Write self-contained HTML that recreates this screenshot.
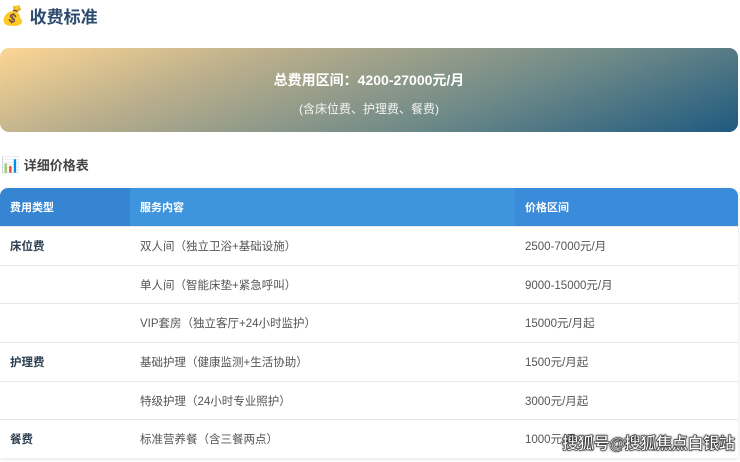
<!DOCTYPE html>
<html><head><meta charset="utf-8"><style>
body{margin:0;width:740px;height:462px;background:#fff;font-family:"Liberation Sans","Noto Sans CJK SC",sans-serif;overflow:hidden;position:relative}
.t1{position:absolute;left:1px;top:3px;font-size:17px;font-weight:bold;color:#2c4a6e;display:flex;align-items:center;gap:5px}
.banner{position:absolute;left:0;top:48px;width:738px;height:84px;border-radius:9px;background:linear-gradient(160deg,#fdd694 0%,#b9ae8c 30%,#6f8a88 65%,#1f5a80 100%);color:#fff;text-align:center}
.banner .a{margin-top:22px;font-size:14px;font-weight:bold}
.banner .b{margin-top:10px;font-size:12px;opacity:.9}
.t2{position:absolute;left:1px;top:155px;font-size:13px;font-weight:bold;color:#444;display:flex;align-items:center;gap:4px}
table{position:absolute;left:0;top:188px;width:738px;border-collapse:collapse;font-size:11.5px;color:#555;box-shadow:0 1px 4px rgba(0,0,0,.12);border-radius:8px 8px 0 0;overflow:hidden}
th{height:38px;color:#fff;text-align:left;padding:0 0 0 10px;font-weight:bold;font-size:11px}
td{height:37.7px;border-top:1px solid #e8e8e8;padding:0 0 0 10px}
td.k{font-weight:bold;color:#2c3e50}
.wm{position:absolute;left:562px;top:430px;white-space:nowrap;font-size:16.5px;font-weight:bold;color:#fff;-webkit-text-stroke:0.6px #333;text-shadow:0 0 2px #000;letter-spacing:-0.8px}
</style></head><body>
<div class="t1"><span style="font-size:19px">💰</span>收费标准</div>
<div class="banner"><div class="a">总费用区间：4200-27000元/月</div><div class="b">(含床位费、护理费、餐费)</div></div>
<div class="t2"><span style="font-size:15px">📊</span>详细价格表</div>
<table>
<tr><th style="width:120px;background:#3585d3">费用类型</th><th style="width:375px;background:#3f95dd">服务内容</th><th style="background:#3a8bd9">价格区间</th></tr>
<tr><td class="k">床位费</td><td>双人间（独立卫浴+基础设施）</td><td>2500-7000元/月</td></tr>
<tr><td></td><td>单人间（智能床垫+紧急呼叫）</td><td>9000-15000元/月</td></tr>
<tr><td></td><td>VIP套房（独立客厅+24小时监护）</td><td>15000元/月起</td></tr>
<tr><td class="k">护理费</td><td>基础护理（健康监测+生活协助）</td><td>1500元/月起</td></tr>
<tr><td></td><td>特级护理（24小时专业照护）</td><td>3000元/月起</td></tr>
<tr><td class="k">餐费</td><td>标准营养餐（含三餐两点）</td><td>1000元/月</td></tr>
</table>
<div class="wm">搜狐号@搜狐焦点白银站</div>
</body></html>
